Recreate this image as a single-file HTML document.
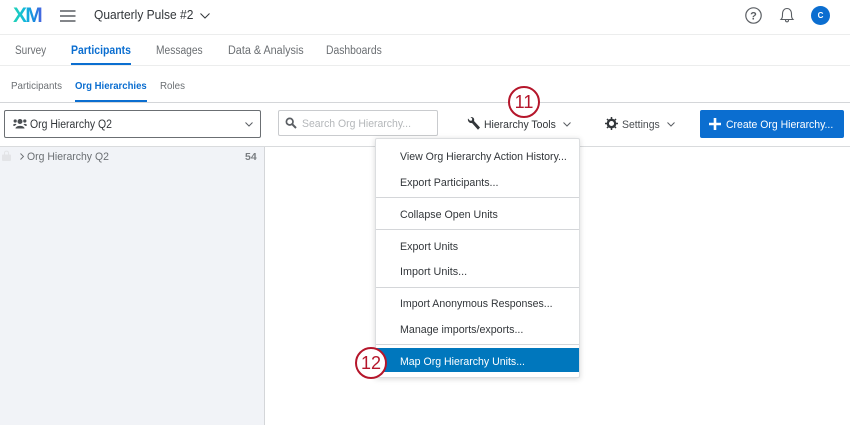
<!DOCTYPE html>
<html><head><meta charset="utf-8"><style>
html,body{margin:0;padding:0;background:#fff}
#p{position:relative;width:850px;height:425px;overflow:hidden;background:#fff;font-family:"Liberation Sans",sans-serif;color:#32363a}
.t{position:absolute;white-space:nowrap;line-height:14px;font-size:11.5px;transform-origin:0 50%}
.a{position:absolute}
.m{left:400px;font-size:11px;color:#32363a}
.s{position:absolute;left:376px;width:203px;height:1px;background:#d4d6d9}
.c{position:absolute;width:28px;height:28px;border:2.500px solid #b5162b;border-radius:50%;background:#fff;color:#b5162b;font-size:18px;line-height:28px;text-align:center}
svg{position:absolute;overflow:visible}
</style></head><body><div id="p">
<!-- logo -->
<div class="t" style="left:13px;top:5px;font-size:21px;line-height:22px;font-weight:700;letter-spacing:-1.800px;width:31px;background:linear-gradient(90deg,#21d4b4 0%,#12b8dc 40%,#1a86e0 70%,#5a5ae0 100%);-webkit-background-clip:text;background-clip:text;color:transparent">XM</div>
<svg style="left:60px;top:10px" width="16" height="12"><path d="M0 1h15.500M0 6h15.500M0 11h15.500" stroke="#5a5e63" stroke-width="1.500"/></svg>
<div class="t" style="left:94px;top:8px;font-size:12.500px;transform:scaleX(.96)">Quarterly Pulse #2</div>
<svg style="left:200px;top:13px" width="10" height="6"><path d="M.5.500L5 5L9.500.500" fill="none" stroke="#32363a" stroke-width="1"/></svg>
<!-- right icons -->
<svg style="left:745px;top:7px" width="17" height="17"><circle cx="8.500" cy="8.500" r="7.700" fill="none" stroke="#5a5e63" stroke-width="1.200"/><text x="8.500" y="12.500" font-size="11" font-weight="700" text-anchor="middle" fill="#5a5e63" font-family="Liberation Sans">?</text></svg>
<svg style="left:780px;top:7px" width="14" height="17"><path d="M1 12.500C2.500 11 2.500 9.500 2.500 7C2.500 3.500 4.500 1.500 7 1.500C9.500 1.500 11.500 3.500 11.500 7C11.500 9.500 11.500 11 13 12.500ZM5.500 13C5.500 15.500 8.500 15.500 8.500 13" fill="none" stroke="#5a5e63" stroke-width="1.100"/></svg>
<div class="a" style="left:811px;top:6px;width:19px;height:19px;border-radius:50%;background:#0b6ed0;color:#fff;font-size:8px;font-weight:700;line-height:19px;text-align:center">C</div>
<div class="a" style="left:0;top:34px;width:850px;height:1px;background:#eceded"></div>
<!-- main tabs -->
<div class="t" style="left:15px;top:44px;color:#6b6f73;transform:scaleX(.87)">Survey</div>
<div class="t" style="left:71px;top:44px;color:#0b6ed0;font-weight:700;transform:scaleX(.91)">Participants</div>
<div class="t" style="left:156px;top:44px;color:#6b6f73;transform:scaleX(.89)">Messages</div>
<div class="t" style="left:228px;top:44px;color:#6b6f73;transform:scaleX(.94)">Data &amp; Analysis</div>
<div class="t" style="left:326px;top:44px;color:#6b6f73;transform:scaleX(.9)">Dashboards</div>
<div class="a" style="left:71px;top:63px;width:60px;height:2px;background:#0b6ed0"></div>
<div class="a" style="left:0;top:65px;width:850px;height:1px;background:#eceded"></div>
<!-- sub tabs -->
<div class="t" style="left:11px;top:79px;font-size:10.500px;color:#6b6f73;transform:scaleX(.93)">Participants</div>
<div class="t" style="left:75px;top:79px;font-size:10.500px;color:#0b6ed0;font-weight:700;transform:scaleX(.91)">Org Hierarchies</div>
<div class="t" style="left:160px;top:79px;font-size:10.500px;color:#6b6f73;transform:scaleX(.93)">Roles</div>
<div class="a" style="left:75px;top:100px;width:72px;height:2px;background:#0b6ed0"></div>
<div class="a" style="left:0;top:102px;width:850px;height:1px;background:#d4d6d9"></div>
<!-- toolbar -->
<div class="a" style="left:4px;top:110px;width:255px;height:26px;border:1px solid #6b6f73;border-radius:2px"></div>
<svg style="left:13px;top:118px" width="14" height="11"><circle cx="7" cy="3.500" r="2.500" fill="#4a4e52"/><path d="M2.500 10.500C2.500 7 11.500 7 11.500 10.500Z" fill="#4a4e52"/><circle cx="2.200" cy="3" r="1.600" fill="#4a4e52"/><circle cx="11.800" cy="3" r="1.600" fill="#4a4e52"/><path d="M0 7.500C0 5.500 3 5.500 3.500 6.500L1.500 8ZM14 7.500C14 5.500 11 5.500 10.500 6.500L12.500 8Z" fill="#4a4e52"/></svg>
<div class="t" style="left:30px;top:118px;transform:scaleX(.91)">Org Hierarchy Q2</div>
<svg style="left:245px;top:122px" width="8" height="5"><path d="M.5.500L4 4L7.500.500" fill="none" stroke="#5a5e63" stroke-width="1"/></svg>
<div class="a" style="left:278px;top:110px;width:158px;height:24px;border:1px solid #c9cbce;border-radius:2px"></div>
<svg style="left:285px;top:117px" width="12" height="12"><circle cx="4.700" cy="4.700" r="3.300" fill="none" stroke="#5a5e63" stroke-width="1.700"/><path d="M7.200 7.200L11 11" stroke="#5a5e63" stroke-width="2"/></svg>
<div class="t" style="left:302px;top:117px;font-size:11px;color:#b4b7ba;transform:scaleX(.95)">Search Org Hierarchy...</div>
<svg style="left:467px;top:117px" width="14" height="14"><path d="M1 1.500L3 3.800L5 3.500L5.200 1.500L3.500.300C6 -.500 7.800 1.500 7 4L13 10.500L11 12.800L5 6C2.500 6.500 .300 4 1 1.500Z" fill="#32363a"/></svg>
<div class="t" style="left:484px;top:118px;font-size:11px;transform:scaleX(.95)">Hierarchy Tools</div>
<svg style="left:563px;top:122px" width="8" height="5"><path d="M.5.500L4 4L7.500.500" fill="none" stroke="#5a5e63" stroke-width="1"/></svg>
<svg style="left:605px;top:117px" width="13" height="13"><circle cx="6.500" cy="6.500" r="3.700" fill="none" stroke="#32363a" stroke-width="2.300"/><path d="M6.500 0V13M0 6.500H13M2 2L11 11M11 2L2 11" stroke="#32363a" stroke-width="1.500" stroke-dasharray="2.300 8.400 2.300 0"/></svg>
<div class="t" style="left:622px;top:118px;font-size:11px;color:#4a4e52;transform:scaleX(.95)">Settings</div>
<svg style="left:667px;top:122px" width="8" height="5"><path d="M.5.500L4 4L7.500.500" fill="none" stroke="#5a5e63" stroke-width="1"/></svg>
<div class="a" style="left:700px;top:110px;width:144px;height:28px;background:#0b6ed0;border-radius:2px"></div>
<svg style="left:709px;top:118px" width="12" height="12"><path d="M6 0V12M0 6H12" stroke="#fff" stroke-width="2.600"/></svg>
<div class="t" style="left:726px;top:118px;font-size:11px;color:#fff;transform:scaleX(.95)">Create Org Hierarchy...</div>
<div class="a" style="left:0;top:146px;width:850px;height:1px;background:#d9dbdd"></div>
<!-- sidebar -->
<div class="a" style="left:0;top:147px;width:264px;height:278px;background:#f1f3f7;border-right:1px solid #d4d6d9"></div>
<svg style="left:2px;top:150px" width="9" height="11"><path d="M2.500 4.500V3C2.500 .500 6.500 .500 6.500 3V4.500" fill="none" stroke="#e3e4e7" stroke-width="1"/><rect y="4.500" width="9" height="6.500" rx="1" fill="#e3e4e7"/></svg>
<svg style="left:20px;top:153px" width="4" height="7"><path d="M.5.500L3.500 3.500L.5 6.500" fill="none" stroke="#6b6f73" stroke-width=".9"/></svg>
<div class="t" style="left:27px;top:150px;font-size:11px;color:#6b6f73;transform:scaleX(.95)">Org Hierarchy Q2</div>
<div class="t" style="left:245px;top:150px;font-size:10.500px;font-weight:700;color:#797d81">54</div>
<!-- menu -->
<div class="a" style="left:375px;top:138px;width:203px;height:238px;background:#fff;border:1px solid #dcdee0;border-radius:2px;box-shadow:0 1px 6px rgba(0,0,0,.16)"></div>
<div class="t m" style="top:150px;transform:scaleX(.96)">View Org Hierarchy Action History...</div>
<div class="t m" style="top:176px;transform:scaleX(.97)">Export Participants...</div>
<div class="s" style="top:197px"></div>
<div class="t m" style="top:208px;transform:scaleX(.97)">Collapse Open Units</div>
<div class="s" style="top:229px"></div>
<div class="t m" style="top:240px;transform:scaleX(.97)">Export Units</div>
<div class="t m" style="top:265px;transform:scaleX(.98)">Import Units...</div>
<div class="s" style="top:287px"></div>
<div class="t m" style="top:297px;transform:scaleX(.96)">Import Anonymous Responses...</div>
<div class="t m" style="top:323px;transform:scaleX(.97)">Manage imports/exports...</div>
<div class="s" style="top:344px"></div>
<div class="a" style="left:376px;top:348px;width:203px;height:24px;background:#0077bd"></div>
<div class="t m" style="top:355px;color:#fff;transform:scaleX(.96)">Map Org Hierarchy Units...</div>
<!-- callouts -->
<div class="c" style="left:508px;top:86px">11</div>
<div class="c" style="left:355px;top:347px">12</div>
</div></body></html>
